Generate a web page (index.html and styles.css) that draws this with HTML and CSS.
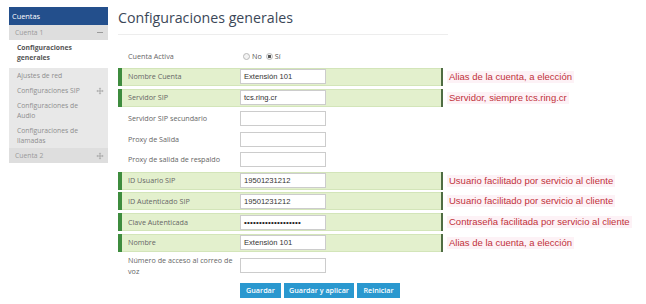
FILE: index.html
```html
<!DOCTYPE html>
<html lang="es">
<head>
<meta charset="utf-8">
<title>Configuraciones generales</title>
<link rel="stylesheet" href="styles.css">
</head>
<body>
<div class="page">
  <nav class="sidebar">
    <div class="side-head">Cuentas</div>
    <div class="side-account">Cuenta 1<span class="dash"></span></div>
    <div class="side-active">Configuraciones<br>generales</div>
    <div class="side-list">
      <div class="side-item">Ajustes de red</div>
      <div class="side-item">Configuraciones SIP
        <svg class="move" viewBox="0 0 10 10" width="8" height="8"><path d="M5 0.5L6.6 2.2H5.6V4.4H7.8V3.4L9.5 5L7.8 6.6V5.6H5.6V7.8H6.6L5 9.5L3.4 7.8H4.4V5.6H2.2V6.6L0.5 5L2.2 3.4V4.4H4.4V2.2H3.4Z" fill="#a9a9a9"/></svg>
      </div>
      <div class="side-item">Configuraciones de<br>Audio</div>
      <div class="side-item">Configuraciones de<br>llamadas</div>
    </div>
    <div class="side-account">Cuenta 2
      <svg class="move" viewBox="0 0 10 10" width="8" height="8"><path d="M5 0.5L6.6 2.2H5.6V4.4H7.8V3.4L9.5 5L7.8 6.6V5.6H5.6V7.8H6.6L5 9.5L3.4 7.8H4.4V5.6H2.2V6.6L0.5 5L2.2 3.4V4.4H4.4V2.2H3.4Z" fill="#a9a9a9"/></svg>
    </div>
  </nav>

  <main class="main">
    <h1 class="title">Configuraciones generales</h1>

    <div class="line">
      <div class="row"><span class="label">Cuenta Activa</span>
        <span class="radios"><span class="radio"></span><span class="rlabel">No</span><span class="radio on"></span><span class="rlabel">Sí</span></span>
      </div>
    </div>
    <div class="line">
      <div class="row hl"><span class="label">Nombre Cuenta</span><span class="input">Extensión 101</span></div>
      <span class="note">Alias de la cuenta, a elección</span>
    </div>
    <div class="line">
      <div class="row hl"><span class="label">Servidor SIP</span><span class="input">tcs.ring.cr</span></div>
      <span class="note">Servidor, siempre tcs.ring.cr</span>
    </div>
    <div class="line">
      <div class="row"><span class="label">Servidor SIP secundario</span><span class="input"></span></div>
    </div>
    <div class="line">
      <div class="row"><span class="label">Proxy de Salida</span><span class="input"></span></div>
    </div>
    <div class="line">
      <div class="row"><span class="label">Proxy de salida de respaldo</span><span class="input"></span></div>
    </div>
    <div class="line">
      <div class="row hl"><span class="label">ID Usuario SIP</span><span class="input">19501231212</span></div>
      <span class="note">Usuario facilitado por servicio al cliente</span>
    </div>
    <div class="line">
      <div class="row hl"><span class="label">ID Autenticado SIP</span><span class="input">19501231212</span></div>
      <span class="note">Usuario facilitado por servicio al cliente</span>
    </div>
    <div class="line">
      <div class="row hl"><span class="label">Clave Autenticada</span><span class="input pw">•••••••••••••••••••</span></div>
      <span class="note">Contraseña facilitada por servicio al cliente</span>
    </div>
    <div class="line">
      <div class="row hl"><span class="label">Nombre</span><span class="input">Extensión 101</span></div>
      <span class="note">Alias de la cuenta, a elección</span>
    </div>
    <div class="line">
      <div class="row tall"><span class="label">Número de acceso al correo de voz</span><span class="input"></span></div>
    </div>

    <div class="buttons">
      <button class="btn b1">Guardar</button>
      <button class="btn b2">Guardar y aplicar</button>
      <button class="btn b3">Reiniciar</button>
    </div>
  </main>
</div>
</body>
</html>
```

FILE: styles.css
```css
html, body {
  margin: 0;
  padding: 0;
  background: #ffffff;
}

body {
  font-family: "Open Sans", "DejaVu Sans", sans-serif;
  color: #666666;
}

.page {
  display: flex;
  align-items: flex-start;
  padding: 7px 0 0 9px;
}

/* Sidebar */
.sidebar {
  width: 99px;
  flex-shrink: 0;
  margin-right: 10px;
  font-size: 6.8px;
}

.side-head {
  height: 18px;
  line-height: 18px;
  background: #234f8c;
  color: #ffffff;
  padding-left: 3px;
  font-size: 7.4px;
}

.side-account {
  display: flex;
  align-items: center;
  height: 15px;
  padding: 0 4px 0 6px;
  background: #dedede;
  color: #9a9a9a;
}

.dash {
  margin-left: auto;
  width: 6px;
  height: 1.3px;
  background: #9a9a9a;
  margin-right: 1px;
}

.move {
  margin-left: auto;
  display: block;
}

.side-active {
  background: #ffffff;
  color: #555555;
  font-weight: 700;
  line-height: 10px;
  padding: 3px 0 5px 8px;
}

.side-list {
  background: #e8e8e8;
}

.side-item {
  display: flex;
  align-items: center;
  padding: 2.5px 4px 2.5px 8px;
  line-height: 10px;
  color: #8e8e8e;
}

/* Main */
.main {
  width: 330px;
  overflow: visible;
}

.title {
  margin: 0 0 12px 0;
  height: 28px;
  line-height: 22px;
  font-size: 14.2px;
  font-weight: 400;
  color: #3b4758;
  border-bottom: 1px solid #ededed;
  box-sizing: border-box;
  width: 330px;
}

.line {
  display: flex;
  align-items: center;
  margin-bottom: 2.75px;
  width: 540px;
}

.row {
  display: flex;
  align-items: center;
  width: 325px;
  height: 18px;
  box-sizing: border-box;
  border-left: 4px solid transparent;
  border-right: 2px solid transparent;
  padding-left: 6px;
  font-size: 7.2px;
  color: #666666;
}

.row.hl {
  background: #e3f0cd;
  border-left-color: #3e8c3e;
  border-right-color: #4f6d43;
  box-shadow: inset 0 1px 0 #d3e5b9, inset 0 -1px 0 #d3e5b9;
}

.row.tall {
  height: 22px;
}

.label {
  width: 112px;
  flex-shrink: 0;
  line-height: 11px;
}

.input {
  display: block;
  width: 86px;
  height: 15px;
  box-sizing: border-box;
  background: #ffffff;
  border: 1px solid #cccccc;
  font-family: "Liberation Sans", Arial, sans-serif;
  font-size: 7.6px;
  line-height: 13px;
  color: #333333;
  padding-left: 3px;
  white-space: nowrap;
  overflow: hidden;
}

.input.pw {
  font-size: 8px;
  letter-spacing: 0.2px;
  color: #222222;
}

.radios {
  display: flex;
  align-items: center;
  margin-left: 3px;
  color: #555555;
}

.radio {
  width: 5px;
  height: 5px;
  border-radius: 50%;
  border: 0.6px solid #b8b8b8;
  background: #f3f3f3;
  margin-right: 2px;
}

.radio.on {
  background: radial-gradient(circle, #555 0 1.4px, #f3f3f3 1.8px);
}

.rlabel {
  margin-right: 4px;
}

.note {
  margin-left: 4px;
  padding: 0 2px;
  font-family: "Liberation Sans", Arial, sans-serif;
  font-size: 9.5px;
  line-height: 12px;
  color: #c1313a;
  background: #fdf2f6;
  white-space: nowrap;
}

.buttons {
  display: flex;
  gap: 3px;
  margin: 6px 0 0 122px;
}

.btn {
  height: 15px;
  border: 0;
  padding: 0;
  background: #2a98cf;
  color: #ffffff;
  font-family: "Open Sans", sans-serif;
  font-weight: 600;
  font-size: 7.2px;
}

.b1 { width: 41px; }
.b2 { width: 70px; }
.b3 { width: 43px; }
```
